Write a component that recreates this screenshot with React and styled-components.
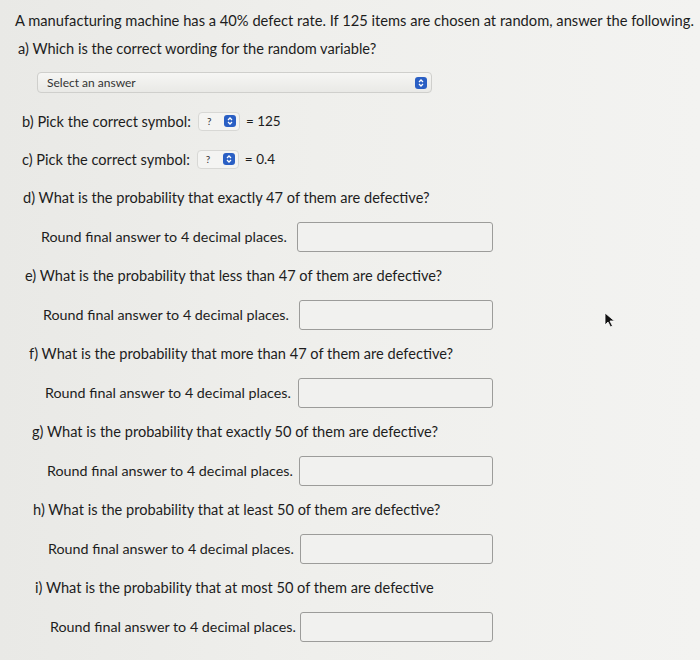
import React from "react";
import styled, { createGlobalStyle } from "styled-components";

const GlobalStyle = createGlobalStyle`
  html, body {
    margin: 0;
    padding: 0;
  }
  body {
    width: 700px;
    height: 660px;
    overflow: hidden;
    background: linear-gradient(90deg, #e9e9e6 0%, #efefec 45%, #f3f3f1 100%);
    font-family: Lato, "Open Sans", sans-serif;
    color: #1d1d1d;
  }
`;

const Page = styled.div`
  display: flex;
  flex-direction: column;
  padding: 10px 0 0 15px;
`;

const Intro = styled.div`
  font-size: 14.7px;
  line-height: 20px;
`;

const Line = styled.div`
  display: flex;
  align-items: center;
  gap: 6px;
  font-size: 14.6px;
  white-space: nowrap;
  height: ${(p) => p.h || 38}px;
  padding-left: ${(p) => p.indent || 0}px;
`;

const BigSelect = styled.div`
  width: 395px;
  height: 21px;
  margin: 6px 0 9px 22px;
  display: flex;
  align-items: center;
  justify-content: space-between;
  padding: 0 4px 0 9px;
  box-sizing: border-box;
  border: 1px solid #cfcfcc;
  border-radius: 4px;
  background: linear-gradient(#f6f6f4, #e9e9e6);
  font-size: 12px;
  color: #333;
`;

const SmallSelect = styled.div`
  width: 42px;
  height: 19px;
  margin-left: 1px;
  display: flex;
  align-items: center;
  justify-content: space-between;
  padding: 0 3px 0 8px;
  box-sizing: border-box;
  border: 1px solid #d8d8d5;
  border-radius: 4px;
  background: #f4f4f2;
  font-size: 10px;
  color: #333;
`;

const Stepper = styled.span`
  width: 12px;
  height: 12px;
  border-radius: 3px;
  background: #2a5fc4;
  display: flex;
  align-items: center;
  justify-content: center;
`;

const Equals = styled.span`
  font-size: 13.5px;
`;

const AnswerRow = styled.div`
  display: flex;
  align-items: center;
  height: 39px;
  padding-left: ${(p) => p.indent}px;
`;

const Label = styled.span`
  font-size: 14.3px;
  white-space: nowrap;
  flex-shrink: 0;
  width: ${(p) => p.w}px;
`;

const Box = styled.div`
  width: ${(p) => p.w}px;
  height: 30px;
  flex-shrink: 0;
  border: 1px solid #9c9c9a;
  border-radius: 3px;
  background: #f1f1ef;
  box-sizing: border-box;
`;

const Cursor = styled.svg`
  position: absolute;
  left: 604px;
  top: 312px;
`;

const StepIcon = () => (
  <Stepper>
    <svg width="8" height="10" viewBox="0 0 8 10">
      <path d="M2 4 L4 2 L6 4" fill="none" stroke="#fff" strokeWidth="1.3" />
      <path d="M2 6 L4 8 L6 6" fill="none" stroke="#fff" strokeWidth="1.3" />
    </svg>
  </Stepper>
);

const questions = [
  { q: "d) What is the probability that exactly 47 of them are defective?", qi: 8, ai: 26, bx: 282, bw: 196 },
  { q: "e) What is the probability that less than 47 of them are defective?", qi: 10, ai: 28, bx: 284, bw: 194 },
  { q: "f) What is the probability that more than 47 of them are defective?", qi: 14, ai: 30, bx: 283, bw: 195 },
  { q: "g) What is the probability that exactly 50 of them are defective?", qi: 17, ai: 32, bx: 284, bw: 194 },
  { q: "h) What is the probability that at least 50 of them are defective?", qi: 18, ai: 33, bx: 285, bw: 193 },
  { q: "i) What is the probability that at most 50 of them are defective", qi: 20, ai: 35, bx: 285, bw: 193 },
];

export default function App() {
  return (
    <>
      <GlobalStyle />
      <Page>
        <Intro>
          A manufacturing machine has a 40% defect rate. If 125 items are chosen at random, answer the following.
        </Intro>
        <Line h={36} indent={3}>a) Which is the correct wording for the random variable?</Line>
        <BigSelect>
          <span>Select an answer</span>
          <StepIcon />
        </BigSelect>
        <Line indent={7}>
          b) Pick the correct symbol:
          <SmallSelect>
            <span>?</span>
            <StepIcon />
          </SmallSelect>
          <Equals>= 125</Equals>
        </Line>
        <Line indent={7}>
          c) Pick the correct symbol:
          <SmallSelect>
            <span>?</span>
            <StepIcon />
          </SmallSelect>
          <Equals>= 0.4</Equals>
        </Line>
        {questions.map((item) => (
          <React.Fragment key={item.q}>
            <Line h={39} indent={item.qi}>{item.q}</Line>
            <AnswerRow indent={item.ai}>
              <Label w={item.bx - item.ai}>Round final answer to 4 decimal places.</Label>
              <Box w={item.bw} />
            </AnswerRow>
          </React.Fragment>
        ))}
      </Page>
      <Cursor width="12" height="16" viewBox="0 0 12 16">
        <path d="M1 1 L1 13 L4 10 L6.5 15 L8.5 14 L6 9 L10.5 9 Z" fill="#111" stroke="#fff" strokeWidth="0.8" />
      </Cursor>
    </>
  );
}
